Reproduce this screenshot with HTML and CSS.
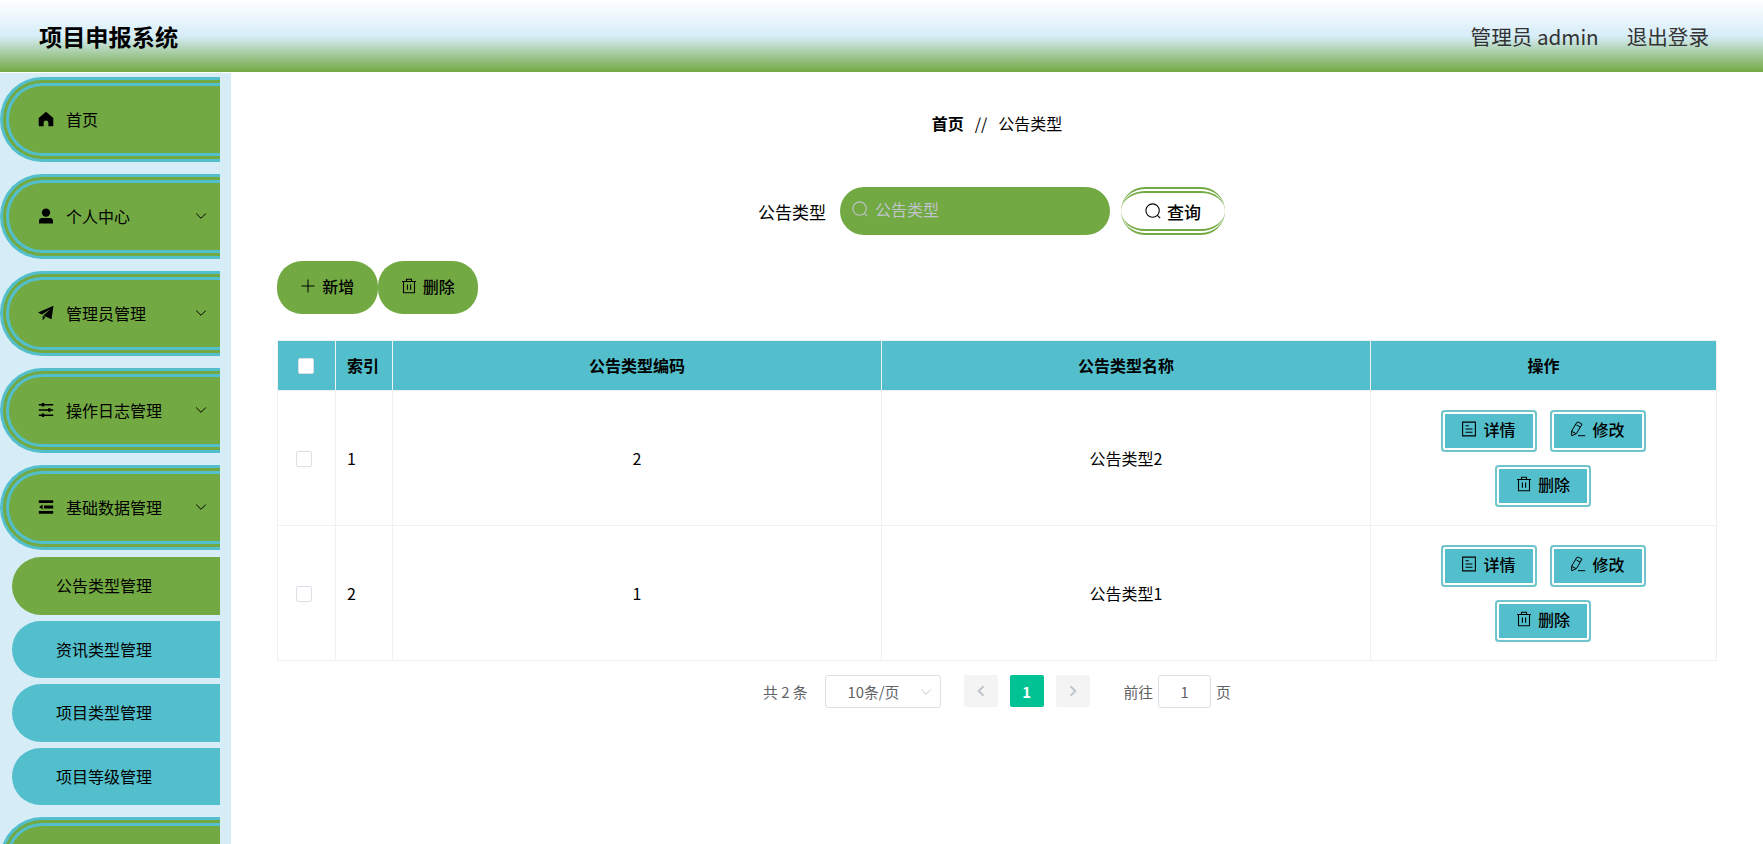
FILE: index.html
```html
<!DOCTYPE html>
<html lang="zh-CN">

<head>
  <meta charset="UTF-8">
  <meta name="viewport" content="width=device-width, initial-scale=1.0">
  <title>项目申报系统</title>
  <link rel="stylesheet" href="styles.css">
</head>

<body>
  <!-- 图标 -->
  <svg class="sprite" width="0" height="0">
    <symbol id="i-home" viewBox="0 0 16 16"><path d="M8 .8 15.3 7v7.4a.8.8 0 0 1-.8.8h-4.100V12a2.400 2.400 0 0 0-4.800 0v3.200H1.500a.8.8 0 0 1-.8-.8V7z" fill="currentColor"/></symbol>
    <symbol id="i-user" viewBox="0 0 16 16"><circle cx="8" cy="4.600" r="4.200" fill="currentColor"/><path d="M1 15.400v-2.200A3.200 3.200 0 0 1 4.200 10h7.600a3.200 3.200 0 0 1 3.200 3.200v2.200z" fill="currentColor"/></symbol>
    <symbol id="i-send" viewBox="0 0 16 16"><path d="M15.500.8 0 7.600l3.900 2L12.600 4 5.300 10.400l8.200 3.900zM4.700 11v4.400L7.500 12z" fill="currentColor"/></symbol>
    <symbol id="i-set" viewBox="0 0 16 16"><path d="M.8 2.700h14.400M.8 8h14.400M.8 13.300h14.400" stroke="currentColor" stroke-width="1.500"/><path d="M5 .9v3.600M11.300 6.200v3.600M5 11.500v3.600" stroke="currentColor" stroke-width="2.400"/></symbol>
    <symbol id="i-fold" viewBox="0 0 16 16"><path d="M.8 2.600h14.400M6 8h9.200M.8 13.400h14.400" stroke="currentColor" stroke-width="2.800"/><path d="M4.600 5.700v4.600L1 8z" fill="currentColor"/></symbol>
    <symbol id="i-down" viewBox="0 0 12 12"><path d="M1.200 3.500 6 8.300l4.800-4.800" fill="none" stroke="currentColor"/></symbol>
    <symbol id="i-search" viewBox="0 0 16 16"><circle cx="7.600" cy="7.600" r="6.700" fill="none" stroke="currentColor" stroke-width="1.100"/><path d="m12.400 12.400 2.800 2.800" stroke="currentColor" stroke-width="1.100"/></symbol>
    <symbol id="i-plus" viewBox="0 0 16 16"><path d="M8 1.500v13M1.500 8h13" stroke="currentColor"/></symbol>
    <symbol id="i-del" viewBox="0 0 16 16"><path d="M1 3.500h14M5.500 3.500V1.300h5v2.200M2.500 3.500v11.200h11V3.500M6.400 6.500v5.300M9.600 6.500v5.300" fill="none" stroke="currentColor" stroke-width="1.100"/></symbol>
    <symbol id="i-doc" viewBox="0 0 16 16"><path d="M1.600 1.100h12.800v13.800H1.600zM4.500 4.800h3.300M4.500 8h7M4.500 11.200h7" fill="none" stroke="currentColor" stroke-width="1.100"/></symbol>
    <symbol id="i-edit" viewBox="0 0 16 16"><path d="M8.600 1.200 12 3.200 6.400 12.600 1.800 14.800 1.600 10.200 6.800 1.400zM6.400 3.900l3.700 2.200M1.700 10.400l4.500 2.300M8 14.700h7.200" fill="none" stroke="currentColor" stroke-linejoin="round"/></symbol>
  </svg>

  <div class="header">
    <div class="title">项目申报系统</div>
    <div class="user">
      <span>管理员 admin</span>
      <span>退出登录</span>
    </div>
  </div>

  <div class="container">
    <div class="aside">
      <ul class="menu">
        <li class="menu-item"><svg class="icon"><use href="#i-home"/></svg><span>首页</span></li>
        <li class="menu-item"><svg class="icon"><use href="#i-user"/></svg><span>个人中心</span><svg class="arrow"><use href="#i-down"/></svg></li>
        <li class="menu-item"><svg class="icon"><use href="#i-send"/></svg><span>管理员管理</span><svg class="arrow"><use href="#i-down"/></svg></li>
        <li class="menu-item"><svg class="icon"><use href="#i-set"/></svg><span>操作日志管理</span><svg class="arrow"><use href="#i-down"/></svg></li>
        <li class="menu-item open"><svg class="icon"><use href="#i-fold"/></svg><span>基础数据管理</span><svg class="arrow"><use href="#i-down"/></svg></li>
        <li>
          <ul class="sub-menu">
            <li class="active">公告类型管理</li>
            <li>资讯类型管理</li>
            <li>项目类型管理</li>
            <li>项目等级管理</li>
          </ul>
        </li>
        <li class="menu-item"></li>
      </ul>
    </div>

    <div class="main">
      <div class="breadcrumb">
        <b>首页</b>
        <span class="separator">//</span>
        <span>公告类型</span>
      </div>

      <div class="search">
        <label>公告类型</label>
        <div class="search-input"><svg class="icon"><use href="#i-search"/></svg><span>公告类型</span></div>
        <button class="search-btn"><svg class="icon"><use href="#i-search"/></svg><span>查询</span></button>
      </div>

      <div class="actions">
        <button class="action-btn"><svg class="icon"><use href="#i-plus"/></svg><span>新增</span></button>
        <button class="action-btn"><svg class="icon"><use href="#i-del"/></svg><span>删除</span></button>
      </div>

      <table class="table">
        <colgroup>
          <col class="col-check">
          <col class="col-index">
          <col class="col-text">
          <col class="col-text">
          <col class="col-btns">
        </colgroup>
        <thead>
          <tr>
            <th><i class="checkbox"></i></th>
            <th class="left">索引</th>
            <th>公告类型编码</th>
            <th>公告类型名称</th>
            <th>操作</th>
          </tr>
        </thead>
        <tbody>
          <tr>
            <td><i class="checkbox"></i></td>
            <td class="left">1</td>
            <td>2</td>
            <td>公告类型2</td>
            <td>
              <div class="btns">
                <button class="row-btn"><svg class="icon"><use href="#i-doc"/></svg><span>详情</span></button>
                <button class="row-btn"><svg class="icon"><use href="#i-edit"/></svg><span>修改</span></button>
                <button class="row-btn"><svg class="icon"><use href="#i-del"/></svg><span>删除</span></button>
              </div>
            </td>
          </tr>
          <tr>
            <td><i class="checkbox"></i></td>
            <td class="left">2</td>
            <td>1</td>
            <td>公告类型1</td>
            <td>
              <div class="btns">
                <button class="row-btn"><svg class="icon"><use href="#i-doc"/></svg><span>详情</span></button>
                <button class="row-btn"><svg class="icon"><use href="#i-edit"/></svg><span>修改</span></button>
                <button class="row-btn"><svg class="icon"><use href="#i-del"/></svg><span>删除</span></button>
              </div>
            </td>
          </tr>
        </tbody>
      </table>

      <div class="pagination">
        <span class="total">共 2 条</span>
        <div class="sizes"><span>10条/页</span><svg class="arrow"><use href="#i-down"/></svg></div>
        <div class="pager">
          <span class="page"><svg class="arrow prev"><use href="#i-down"/></svg></span>
          <span class="page active">1</span>
          <span class="page"><svg class="arrow next"><use href="#i-down"/></svg></span>
        </div>
        <div class="jump">前往<span class="jump-input">1</span>页</div>
      </div>
    </div>
  </div>
</body>

</html>
```
FILE: styles.css
```css
* {
  box-sizing: border-box;
}

body {
  margin: 0;
  height: 844px;
  overflow: hidden;
  display: flex;
  flex-direction: column;
  background: #fff;
  color: #000;
  font-family: "Noto Sans CJK SC", sans-serif;
  font-size: 16px;
}

ul,
li {
  list-style: none;
  padding: 0;
  margin: 0;
}

button {
  font-family: inherit;
  border: 0;
  padding: 0;
  color: #000;
}

svg {
  flex: none;
}

.sprite {
  position: absolute;
}

.icon {
  width: 16px;
  height: 16px;
}

.arrow {
  width: 12px;
  height: 12px;
}

/* 头部 */
.header {
  flex: none;
  height: 72px;
  margin-bottom: 1px;
  padding: 0 54px 1px 39px;
  display: flex;
  align-items: center;
  justify-content: space-between;
  background: linear-gradient(180deg, #fff 0%, #d6edf8 50%, #72a943 100%);
}

.title {
  font-size: 23.2px;
  font-weight: bold;
}

.user {
  display: flex;
  gap: 28px;
  color: #333;
  font-size: 20.6px;
}

.container {
  flex: 1;
  min-height: 0;
  display: flex;
}

/* 侧边菜单 */
.aside {
  flex: none;
  width: 231px;
  padding: 4px 11px 0 0;
  background: #d6edf8;
  overflow: hidden;
}

.menu-item {
  height: 85px;
  margin-bottom: 12px;
  padding: 0 13px 1px 29px;
  display: flex;
  align-items: center;
  background: #72a943;
  border: 9px double #54bfcc;
  border-right: 0;
  border-radius: 42px 0 0 42px;
}

.menu-item.open {
  margin-bottom: 7px;
}

.menu-item span {
  flex: 1;
  margin-left: 12px;
}

.sub-menu {
  padding: 0 0 12px 12px;
  display: flex;
  flex-direction: column;
  gap: 6px;
}

.sub-menu li {
  height: 57.500px;
  line-height: 56px;
  padding-left: 44px;
  background: #54bfcc;
  border-radius: 29px 0 0 29px;
}

.sub-menu .active {
  background: #72a943;
}

/* 内容区 */
.main {
  flex: 1;
  padding: 35px 46px 0;
}

.breadcrumb {
  height: 30px;
  display: flex;
  align-items: center;
  justify-content: center;
  gap: 11px;
}

.search {
  margin-top: 49px;
  padding-right: 11px;
  display: flex;
  align-items: center;
  justify-content: center;
  height: 48px;
}

.search label {
  font-size: 17px;
}

.search-input {
  width: 270px;
  height: 48px;
  margin: 0 11px 0 14px;
  padding: 0 12px 4px;
  display: flex;
  align-items: center;
  gap: 7px;
  background: #72a943;
  border-radius: 24px;
  color: #c0c4cc;
}

.search-btn {
  width: 104px;
  height: 48px;
  display: flex;
  align-items: center;
  justify-content: center;
  gap: 6px;
  background: #fff;
  border: 6px double #72a943;
  border-width: 6px 0;
  border-radius: 24px;
  font-size: 17px;
  font-weight: 500;
}

.actions {
  margin-top: 26px;
  display: flex;
}

.action-btn {
  width: 100.500px;
  height: 53px;
  padding-bottom: 3px;
  display: flex;
  align-items: center;
  justify-content: center;
  gap: 6px;
  background: #72a943;
  border-radius: 25px;
  font-size: 16px;
  font-weight: 500;
}

/* 表格 */
.table {
  width: 1440px;
  margin-top: 26px;
  table-layout: fixed;
  border-collapse: collapse;
}

.col-check {
  width: 58px;
}

.col-index {
  width: 57px;
}

.col-text {
  width: 489px;
}

.table th,
.table td {
  padding: 0;
  text-align: center;
  border: 1px solid #eef0f2;
}

.table th {
  height: 50px;
  padding-bottom: 1px;
  background: #54bfcc;
}

.table td {
  height: 135px;
}

.table .left {
  padding-left: 11px;
  text-align: left;
}

.checkbox {
  display: block;
  width: 16px;
  height: 16px;
  margin: 2px 0 0 18px;
  background: #fff;
  border: 1px solid #dcdfe6;
  border-radius: 2px;
}

th .checkbox {
  margin-left: 20px;
}

.btns {
  display: flex;
  flex-wrap: wrap;
  justify-content: center;
  gap: 13px;
  padding: 0 61px 0 60px;
}

.row-btn {
  width: 96px;
  height: 42px;
  padding-bottom: 3px;
  display: flex;
  align-items: center;
  justify-content: center;
  gap: 6px;
  background: #54bfcc;
  border-radius: 4px;
  box-shadow: inset 0 0 0 2px #6fc5cb, inset 0 0 0 4px #fff;
  font-size: 16px;
  font-weight: 500;
}

/* 分页 */
.pagination {
  margin-top: 14px;
  display: flex;
  align-items: center;
  justify-content: center;
  color: #606266;
  font-size: 14.800px;
}

.sizes {
  width: 116px;
  height: 33px;
  margin: 0 23px 0 17px;
  padding: 0 8px 0 22px;
  display: flex;
  align-items: center;
  justify-content: space-between;
  border: 1px solid #dcdfe6;
  border-radius: 3px;
}

.sizes .arrow,
.page .arrow {
  color: #c0c4cc;
}

.pager {
  display: flex;
  gap: 12px;
}

.page {
  width: 34px;
  height: 32px;
  margin-bottom: 1px;
  display: flex;
  align-items: center;
  justify-content: center;
  background: #f4f4f5;
  border-radius: 2px;
  font-weight: bold;
}

.page.active {
  background: #00c292;
  color: #fff;
}

.page .arrow {
  stroke-width: 2;
}

.prev {
  transform: rotate(90deg);
}

.next {
  transform: rotate(-90deg);
}

.jump {
  margin-left: 34px;
  display: flex;
  align-items: center;
}

.jump-input {
  width: 53px;
  height: 33px;
  margin: 0 5px;
  line-height: 31px;
  text-align: center;
  border: 1px solid #dcdfe6;
  border-radius: 3px;
}
```
